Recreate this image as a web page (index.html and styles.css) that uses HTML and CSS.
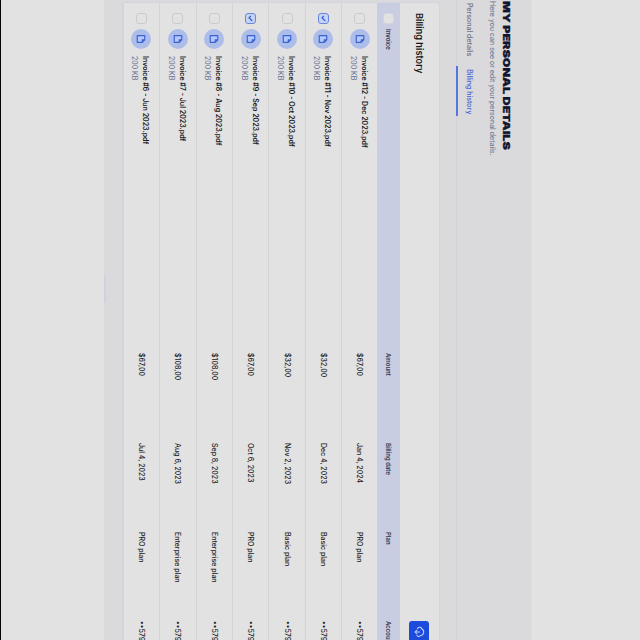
FILE: index.html
```html
<!DOCTYPE html>
<html lang="en">
<head>
<meta charset="utf-8">
<title>Billing history</title>
<link rel="stylesheet" href="styles.css">
</head>
<body>
<main class="screen">
  <section class="panel">
    <header class="heading">
      <h1>MY PERSONAL DETAILS</h1>
      <p>Here you can see or edit your personal details.</p>
    </header>
    <nav class="tabs"><span class="tab">Personal details</span><span class="tab active">Billing history</span></nav>
    <article class="card">
      <div class="card-head">
        <h2>Billing history</h2>
        <span class="download"><svg width="12" height="12" viewBox="0 0 24 24"><path d="M5 15a5 5 0 0 1 1-9 7 7 0 0 1 13 3 4 4 0 0 1 0 7M12 11v9m-4-4 4 4 4-4"/></svg></span>
      </div>
      <div class="row labels"><i class="check"></i><span class="label-name">Invoice</span><span>Amount</span><span>Billing date</span><span>Plan</span><span>Account</span></div>
      <div id="rows"></div>
    </article>
    <div class="handle"></div>
  </section>
</main>
<script src="app.js"></script>
</body>
</html>
```
FILE: styles.css
```css
* { box-sizing: border-box; }
body { margin: 0; width: 640px; height: 640px; overflow: hidden; background: #e2e2e2; }
h1, h2, p { margin: 0; }
.screen {
  width: 640px; height: 640px; padding-top: 108px; overflow: hidden;
  border-bottom: 1px solid #050505;
  transform: rotate(90deg);
  font-family: Inter, "Liberation Sans", sans-serif;
  color: #202124; white-space: nowrap;
}
.panel { height: 428px; background: #dadadc; border-top: 1px solid #dedee0; display: flex; flex-direction: column; }
.heading { height: 49px; padding: 19px 0 0 1px; }
h1 { width: max-content; font-size: 9.4px; line-height: 11px; font-weight: 900; color: #11142f; -webkit-text-stroke: 0.3px #11142f; transform: scaleX(1.335); transform-origin: 0 0; }
.heading p { margin-top: 4px; font-size: 7px; line-height: 9px; letter-spacing: 0.01px; color: #6e7088; }
.tabs { display: flex; gap: 8px; height: 26px; padding-left: 0; border-bottom: 1px solid #d0d2d7; }
.tab { height: 26px; padding: 8px 2px 0 3px; font-size: 7px; line-height: 9px; font-weight: 500; color: #6c6f86; }
.tab.active { border-bottom: 2px solid #5577dc; color: #4062d8; }
.card { margin: 16px 0 0 2px; width: 900px; height: 318px; border: 1px solid #d2d4de; border-right: 0; border-radius: 3px 0 0 3px; background: #e2e2e2; overflow: hidden; }
.card-head { height: 39px; padding: 0 0 0 10px; display: flex; align-items: center; }
h2 { width: 608px; font-size: 9.2px; line-height: 12px; font-weight: 600; color: #17181c; }
.download { width: 76px; height: 20px; padding: 4px 5px; border-radius: 3px; background: #1d4bdc; }
svg { display: block; fill: none; stroke-linecap: round; stroke-linejoin: round; }
.download svg { stroke: #c4d1fb; stroke-width: 2.1; }
.row { display: grid; grid-template-columns: 10px 20px 310px 90px 89px 89px 120px; align-items: center; height: 36.4px; padding-left: 10px; border-bottom: 1px solid #d3d4d6; font-size: 7px; line-height: 9px; }
.labels { height: 22.5px; border: 0; background: #c9cde1; font-size: 6px; font-weight: 600; color: #34374d; }
.label-name { grid-column: 2 / 4; padding-left: 6px; }
.check { width: 11px; height: 11px; border: 1px solid #cbcbcd; border-radius: 3px; background: #e2e2e2; }
.labels .check { border-color: #d5d5dc; }
.check.on { border-color: #6c87d9; background: #c7d3f5; }
.check svg { width: 9px; height: 9px; stroke: #395fd1; stroke-width: 3; }
.badge { width: 20px; height: 20px; margin-left: 6px; padding: 5px; border-radius: 50%; background: #adbdea; }
.badge svg { width: 10px; height: 10px; stroke: #3c61d0; stroke-width: 2.8; fill: #b2c8ff; }
.file { padding: 2px 0 0 13px; font-weight: 600; font-size: 7.05px; line-height: 11px; color: #17181b; }
.file small { display: block; font-size: 7px; font-weight: 400; color: #656d91; }
.value { font-weight: 500; }
.handle { width: 28px; height: 2px; margin: auto 0 0 275px; background: #cfd1df; border-radius: 2px 2px 0 0; }
```
FILE: app.js
```js
const invoices = [
  ["Invoice #12 - Dec 2023.pdf", "$67,00", "Jan 4, 2024", "PRO plan", false],
  ["Invoice #11 - Nov 2023.pdf", "$32,00", "Dec 4, 2023", "Basic plan", true],
  ["Invoice #10 - Oct 2023.pdf", "$32,00", "Nov 2, 2023", "Basic plan", false],
  ["Invoice #9 - Sep 2023.pdf", "$67,00", "Oct 6, 2023", "PRO plan", true],
  ["Invoice #8 - Aug 2023.pdf", "$108,00", "Sep 8, 2023", "Enterprise plan", false],
  ["Invoice #7 - Jul 2023.pdf", "$108,00", "Aug 6, 2023", "Enterprise plan", false],
  ["Invoice #6 - Jun 2023.pdf", "$67,00", "Jul 4, 2023", "PRO plan", false]
];
const tick = '<svg viewBox="0 0 24 24"><path d="m6 12 4 4 8-8"/></svg>';
const page = '<svg viewBox="0 0 24 24"><path d="M4 3h10l6 6v12H4zM14 3v6h6"/></svg>';
document.getElementById("rows").innerHTML = invoices.map(([name, amount, date, plan, on]) =>
  `<div class="row"><i class="check ${on ? "on" : ""}">${on ? tick : ""}</i><span class="badge">${page}</span>
  <div class="file">${name}<small>200 KB</small></div><span class="value">${amount}</span><span class="value">${date}</span><span class="value">${plan}</span><span class="value">••5798</span></div>`
).join("");
```
